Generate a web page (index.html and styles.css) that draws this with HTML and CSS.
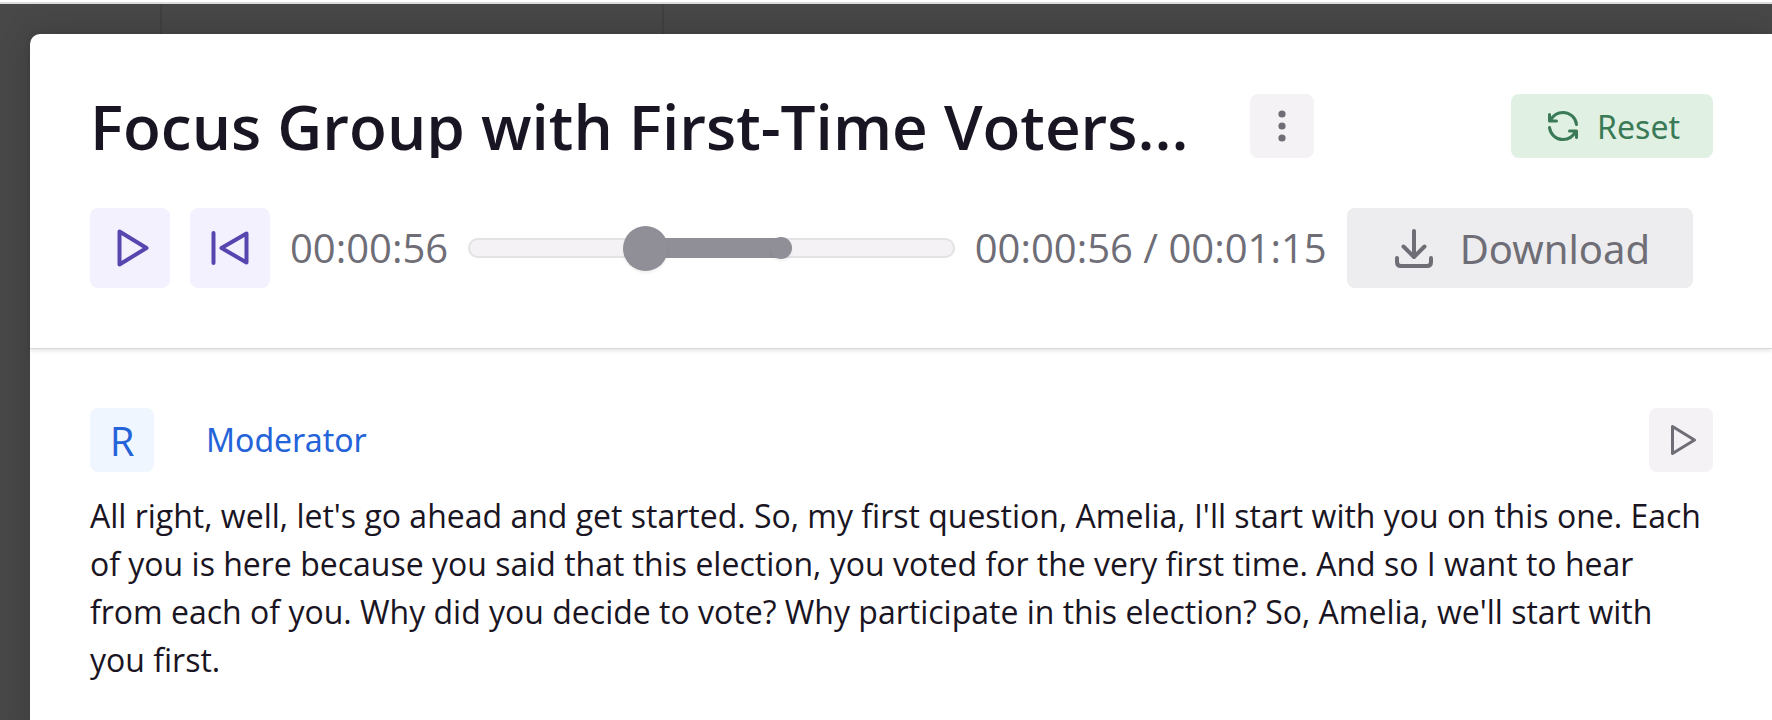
FILE: index.html
```
<!DOCTYPE html>
<html lang="en">
<head>
    <meta charset="UTF-8">
    <meta name="viewport" content="width=device-width, initial-scale=1.0">
    <title>Focus Group with First-Time Voters</title>
    <link rel="stylesheet" href="styles.css">
</head>
<body>
    <div class="backdrop">
        <div class="backdrop-col"></div>
        <div class="backdrop-col"></div>
    </div>
    <main class="modal">
        <header class="modal-header">
            <div class="title-row">
                <h1 class="title">Focus Group with First-Time Voters...</h1>
                <button class="btn btn-square btn-muted" type="button" aria-label="More options">
                    <svg width="64" height="64" viewBox="0 0 64 64" fill="currentColor">
                        <circle cx="32" cy="20" r="3.6"/>
                        <circle cx="32" cy="32" r="3.6"/>
                        <circle cx="32" cy="44" r="3.6"/>
                    </svg>
                </button>
                <button class="btn btn-reset" type="button">
                    <svg width="32" height="32" viewBox="0 0 32 32" fill="none" stroke="currentColor" stroke-width="3" stroke-linecap="round" stroke-linejoin="round">
                        <path d="M29.5 14.5C28.8 7.8 23 2.5 16 2.5C10.5 2.5 6 5.5 3.5 10.5"/>
                        <path d="M2.5 4.5V11H9.5"/>
                        <path d="M2.5 17.5C3.2 24.2 9 29.5 16 29.5C21.5 29.5 26 26.5 28.5 21.5"/>
                        <path d="M29.5 27.5V21H22.5"/>
                    </svg>
                    Reset
                </button>
            </div>
            <div class="player">
                <button class="btn btn-player" type="button" aria-label="Play">
                    <svg width="80" height="80" viewBox="0 0 80 80" fill="none" stroke="currentColor" stroke-width="4" stroke-linejoin="round">
                        <path d="M29.5 23.5V56.5L56.5 40Z"/>
                    </svg>
                </button>
                <button class="btn btn-player" type="button" aria-label="Back to start">
                    <svg width="80" height="80" viewBox="0 0 80 80" fill="none" stroke="currentColor" stroke-width="4" stroke-linejoin="round" stroke-linecap="round">
                        <path d="M23.5 25V55M56.5 25.5V54.5L31.5 40Z"/>
                    </svg>
                </button>
                <span class="time">00:00:56</span>
                <div class="slider">
                    <div class="slider-fill"></div>
                    <input class="range range-end" type="range" min="0" max="100" value="65" aria-label="End">
                    <input class="range range-start" type="range" min="0" max="100" value="35" aria-label="Position">
                </div>
                <span class="time">00:00:56 / 00:01:15</span>
                <button class="btn btn-download" type="button">
                    <svg width="40" height="40" viewBox="0 0 40 40" fill="none" stroke="currentColor" stroke-width="4" stroke-linecap="round" stroke-linejoin="round">
                        <path d="M20 3V27M9.5 18.5L20 29L30.5 18.5"/>
                        <path d="M3 30V34Q3 38 7 38H33Q37 38 37 34V30"/>
                    </svg>
                    Download
                </button>
            </div>
        </header>
        <section class="transcript">
            <div class="speaker-row">
                <button class="btn btn-square btn-speaker" type="button">R</button>
                <a class="speaker" href="#">Moderator</a>
                <button class="btn btn-square btn-muted" type="button" aria-label="Play paragraph">
                    <svg width="64" height="64" viewBox="0 0 64 64" fill="none" stroke="currentColor" stroke-width="3" stroke-linejoin="round">
                        <path d="M23.5 18.5V45.5L45.5 32Z"/>
                    </svg>
                </button>
            </div>
            <p class="text">All right, well, let's go ahead and get started. So, my first question, Amelia, I'll start with you on this one. Each of you is here because you said that this election, you voted for the very first time. And so I want to hear from each of you. Why did you decide to vote? Why participate in this election? So, Amelia, we'll start with you first.</p>
        </section>
    </main>
</body>
</html>
```
FILE: styles.css
```
* {
    box-sizing: border-box;
}

body {
    margin: 0;
    min-height: 100vh;
    overflow: hidden;
    font-family: 'Open Sans', 'Noto Sans', sans-serif;
    color: #1a1523;
    background-color: #484848;
    border-top: 2px solid #fff;
    display: grid;
}

/* dimmed page behind the modal */
.backdrop {
    grid-area: 1 / 1;
    display: grid;
    grid-template-columns: 162px 502px;
    border-top: 2px solid #dcdcdc;
}

.backdrop-col {
    border-right: 2px solid #414141;
}

.modal {
    grid-area: 1 / 1;
    position: relative;
    margin: 32px 0 0 30px;
    background-color: #fff;
    border-radius: 10px 0 0 0;
    box-shadow: 0 0 32px rgba(0, 0, 0, 0.2);
}

.modal-header {
    padding: 60px 59px 60px 60px;
    border-bottom: 1px solid #d8d8da;
    box-shadow: 0 2px 4px rgba(0, 0, 0, 0.1);
}

.title-row,
.player,
.speaker-row {
    display: flex;
    align-items: center;
}

.title {
    margin: 0 61px 0 0;
    font-size: 62px;
    line-height: 64px;
    font-weight: 600;
    white-space: nowrap;
    overflow: hidden;
    text-overflow: ellipsis;
}

.btn {
    display: flex;
    align-items: center;
    justify-content: center;
    flex-shrink: 0;
    height: 64px;
    padding: 0;
    border: none;
    border-radius: 8px;
    font: inherit;
    font-size: 32px;
    cursor: pointer;
}

.btn-square {
    width: 64px;
}

.btn-muted {
    color: #6f6e77;
    background-color: #f4f2f4;
}

.btn-reset {
    gap: 18px;
    margin-left: auto;
    padding: 0 33px 0 36px;
    font-family: 'Noto Sans', 'Open Sans', sans-serif;
    color: #3b7a57;
    background-color: #e0f1e4;
}

.player {
    gap: 20px;
    margin: 50px 20px 0 0;
}

.btn-player {
    width: 80px;
    height: 80px;
    color: #5746af;
    background-color: #f4f1fe;
}

.time {
    font-size: 40px;
    line-height: 60px;
    color: #6f6e77;
    white-space: nowrap;
}

.slider {
    position: relative;
    flex: 1;
    height: 20px;
    border-radius: 10px;
    background-color: #f4f2f4;
    box-shadow: inset 0 0 0 2px #e4e2e4;
}

.slider-fill {
    height: 20px;
    margin: 0 36%;
    background-color: #908e96;
}

.range {
    position: absolute;
    inset: 0;
    width: 100%;
    height: 20px;
    margin: 0;
    background: none;
    appearance: none;
    pointer-events: none;
}

.range::-webkit-slider-thumb {
    appearance: none;
    width: 22px;
    height: 22px;
    border-radius: 50%;
    background-color: #908e96;
    box-shadow: 0 2px 3px rgba(0, 0, 0, 0.06);
    pointer-events: auto;
}

.range-start::-webkit-slider-thumb {
    width: 45px;
    height: 45px;
}

.btn-download {
    gap: 26px;
    height: 80px;
    padding: 0 43px 0 47px;
    font-family: 'Noto Sans', 'Open Sans', sans-serif;
    font-size: 40px;
    color: #6f6e77;
    background-color: #ededef;
}

.transcript {
    padding: 59px 59px 59px 60px;
}

.btn-speaker {
    font-size: 40px;
    color: #2563d9;
    background-color: #eff6ff;
}

.speaker {
    margin: 0 auto 0 52px;
    font-family: 'Noto Sans', 'Open Sans', sans-serif;
    font-size: 32px;
    line-height: 48px;
    color: #2563d9;
    text-decoration: none;
}

.text {
    margin: 20px 0 0;
    font-size: 32px;
    line-height: 48px;
}
```
